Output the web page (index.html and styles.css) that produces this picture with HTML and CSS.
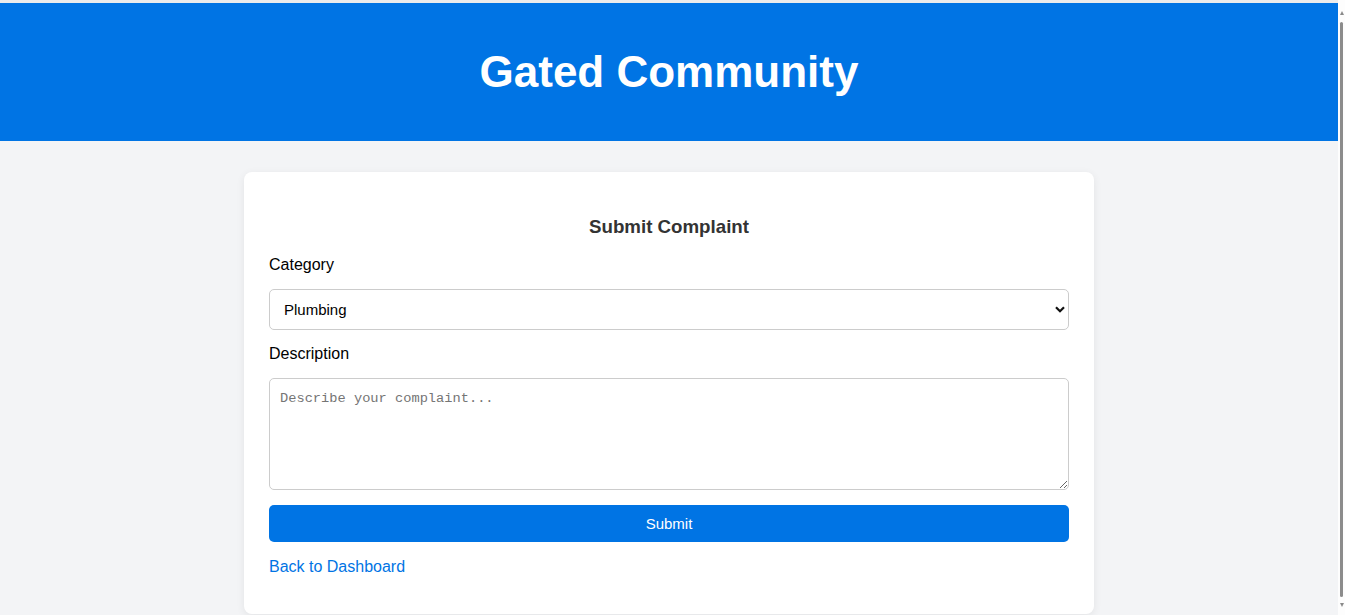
FILE: index.html
```html
<!DOCTYPE html>
<html lang="en">
<head>
<meta charset="utf-8">
<title>Submit Complaint - Gated Community</title>
<link rel="stylesheet" href="styles.css">
</head>
<body>
<div class="page">
  <div class="topline"></div>
  <header class="site-header">
    <h1 class="site-title">Gated Community</h1>
  </header>
  <main class="card">
    <h3 class="card-title">Submit Complaint</h3>
    <form class="complaint-form">
      <label class="field-label" for="category">Category</label>
      <div class="select-wrap">
        <select id="category" class="field-select">
          <option>Plumbing</option>
          <option>Electrical</option>
          <option>Security</option>
          <option>Maintenance</option>
          <option>Other</option>
        </select>
        <svg class="select-arrow" width="10" height="7" viewBox="0 0 10 7" aria-hidden="true"><path d="M1 1.2 L5 5.2 L9 1.2" fill="none" stroke="#111" stroke-width="2.2"/></svg>
      </div>
      <label class="field-label label-desc" for="desc">Description</label>
      <textarea id="desc" class="field-text" placeholder="Describe your complaint..."></textarea>
      <button type="button" class="submit-btn">Submit</button>
      <a class="back-link" href="#">Back to Dashboard</a>
    </form>
  </main>
</div>
<div class="scrollbar" aria-hidden="true">
  <div class="sb-arrow sb-up"></div>
  <div class="sb-thumb"></div>
  <div class="sb-arrow sb-down"></div>
</div>
</body>
</html>
```
FILE: styles.css
```css
html, body {
  height: 615px;
  overflow: hidden;
}
body {
  margin: 0;
  display: flex;
  background: #f3f4f6;
  font-family: "Liberation Sans", Arial, sans-serif;
  color: #000;
}
.page {
  flex: 1;
  min-width: 0;
}
.scrollbar {
  width: 7px;
  height: 615px;
  background: #fdfdfd;
  display: flex;
  flex-direction: column;
  align-items: flex-end;
  padding: 11px 1px 8px 0;
  box-sizing: border-box;
}
.sb-arrow {
  width: 0;
  height: 0;
  border-left: 2.5px solid transparent;
  border-right: 2.5px solid transparent;
}
.sb-up {
  border-bottom: 4px solid #8a8a8a;
}
.sb-down {
  border-top: 4px solid #8a8a8a;
}
.sb-thumb {
  flex: 1;
  width: 3px;
  margin: 7px 1px 6px 0;
  background: #8c8c8c;
  border-radius: 2px;
}
.topline {
  height: 3px;
  background: #ececec;
}
.site-header {
  background: #0074e4;
  height: 138px;
  display: flex;
  align-items: center;
  justify-content: center;
}
.site-title {
  margin: 0;
  color: #fff;
  font-size: 44px;
  line-height: 50px;
  font-weight: 700;
}
.card {
  display: block;
  width: 800px;
  margin: 31px auto 0;
  padding: 25px;
  background: #fff;
  border-radius: 8px;
  box-shadow: 0 2px 8px rgba(0, 0, 0, 0.07);
}
.card-title {
  margin: 19px 0 0;
  font-size: 18.72px;
  line-height: 21px;
  font-weight: 700;
  text-align: center;
  color: #333;
}
.complaint-form {
  display: flex;
  flex-direction: column;
  align-items: stretch;
}
.field-label {
  display: block;
  margin-top: 19px;
  font-size: 16px;
  line-height: 18px;
}
.label-desc {
  margin-top: 15px;
}
.select-wrap {
  position: relative;
  margin-top: 15px;
}
.field-select {
  display: block;
  width: 100%;
  height: 41px;
  box-sizing: border-box;
  padding: 0 14px;
  border: 1px solid #ccc;
  border-radius: 5px;
  background: #fff;
  font-family: "Liberation Sans", Arial, sans-serif;
  font-size: 15px;
  color: #000;
  appearance: none;
  -webkit-appearance: none;
}
.select-arrow {
  position: absolute;
  right: 4px;
  top: 17px;
  pointer-events: none;
}
.field-text {
  display: block;
  margin-top: 15px;
  width: 100%;
  height: 112px;
  box-sizing: border-box;
  padding: 12px 10px 10px;
  border: 1px solid #ccc;
  border-radius: 5px;
  font-family: "Liberation Mono", monospace;
  font-size: 13.7px;
  line-height: 16px;
  color: #000;
  resize: vertical;
}
.field-text::placeholder {
  color: #757575;
}
.submit-btn {
  display: block;
  margin-top: 15px;
  width: 100%;
  height: 37px;
  border: none;
  border-radius: 5px;
  background: #0074e4;
  color: #fff;
  font-family: "Liberation Sans", Arial, sans-serif;
  font-size: 15px;
}
.back-link {
  display: block;
  margin-top: 16px;
  margin-bottom: 13px;
  font-size: 16px;
  line-height: 18px;
  color: #0074e4;
  text-decoration: none;
}
```
